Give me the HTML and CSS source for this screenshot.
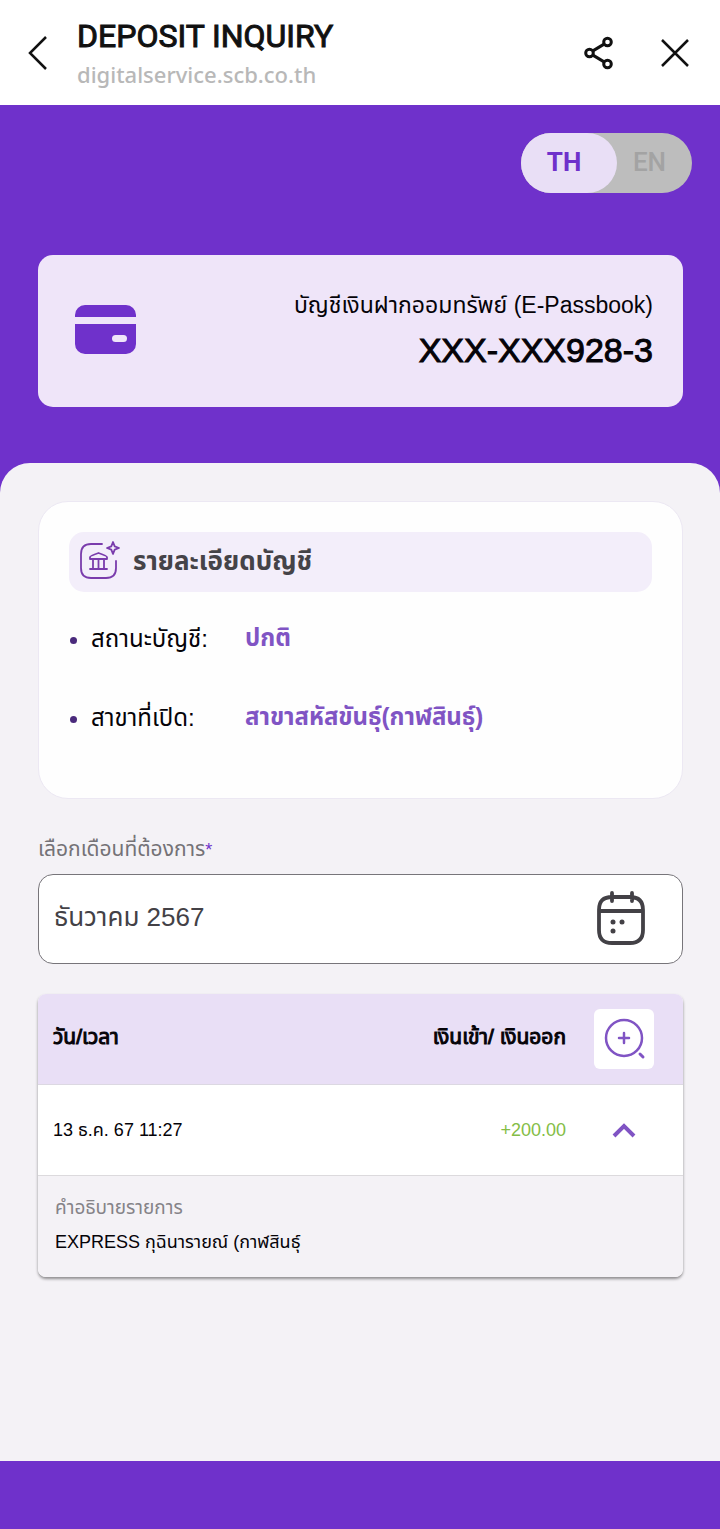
FILE: index.html
```html
<!DOCTYPE html>
<html lang="th">
<head>
<meta charset="utf-8">
<meta name="viewport" content="width=device-width, initial-scale=1">
<title>DEPOSIT INQUIRY</title>
<link rel="stylesheet" href="styles.css">
</head>
<body>
<header class="topbar">
  <button class="icon-button back" type="button" aria-label="Back">
    <svg width="20" height="34" viewBox="0 0 20 34" fill="none" stroke="currentColor" stroke-width="2.500"><path d="M18 1 2 17l16 16"/></svg>
  </button>
  <div class="heading">
    <h1 class="title">DEPOSIT INQUIRY</h1>
    <p class="host">digitalservice.scb.co.th</p>
  </div>
  <button class="icon-button" type="button" aria-label="Share">
    <svg width="30" height="34" viewBox="0 0 30 34" fill="none" stroke="currentColor" stroke-width="3"><circle cx="23.500" cy="6" r="3.800"/><circle cx="5.500" cy="17" r="3.800"/><circle cx="23.500" cy="28" r="3.800"/><path d="m8.900 14.900 11.200-6.800M8.900 19.100l11.200 6.800"/></svg>
  </button>
  <button class="icon-button" type="button" aria-label="Close">
    <svg width="30" height="30" viewBox="0 0 30 30" fill="none" stroke="currentColor" stroke-width="2.500"><path d="m2 2 26 26M28 2 2 28"/></svg>
  </button>
</header>

<section class="hero">
  <div class="language">
    <button class="language-option active" type="button" aria-pressed="true">TH</button>
    <button class="language-option" type="button" aria-pressed="false">EN</button>
  </div>
  <div class="account">
    <svg width="62" height="50" viewBox="0 0 62 50" fill="#6f31cb"><path d="M0 12V10A10 10 0 0 1 10 0H51A10 10 0 0 1 61 10V12ZM0 19H61V39A10 10 0 0 1 51 49H10A10 10 0 0 1 0 39Z"/><rect x="37" y="30" width="15" height="7" rx="3.500" fill="#efe5f9"/></svg>
    <div class="account-text">
      <p class="account-type">บัญชีเงินฝากออมทรัพย์ (E-Passbook)</p>
      <p class="account-number">XXX-XXX928-3</p>
    </div>
  </div>
</section>

<main class="sheet">
  <section class="details">
    <h2 class="details-title">
      <svg width="42" height="40" viewBox="0 0 42 40" fill="none" stroke="#7a3cac" stroke-width="1.800" stroke-linecap="round" stroke-linejoin="round"><path d="M23 3H12Q2 3 2 13V27Q2 37 12 37H27Q37 37 37 27V20"/><path d="m34 1 1.700 4.300L40 7l-4.300 1.700L34 13l-1.700-4.300L28 7l4.300-1.700Z"/><path d="M11 16q0-1 8.500-4 8.500 3 8.500 4v2H11ZM14 18v9M19.500 18v9M25 18v9M11 28H28"/></svg>
      <span>รายละเอียดบัญชี</span>
    </h2>
    <dl class="facts">
      <dt>สถานะบัญชี:</dt><dd>ปกติ</dd>
      <dt>สาขาที่เปิด:</dt><dd>สาขาสหัสขันธุ์(กาฬสินธุ์)</dd>
    </dl>
  </section>

  <div class="field">
    <label class="field-label" for="month">เลือกเดือนที่ต้องการ<span class="required">*</span></label>
    <div class="field-box">
      <input class="field-input" id="month" type="text" value="ธันวาคม 2567" readonly>
      <button class="icon-button calendar" type="button" aria-label="เปิดปฏิทิน">
        <svg width="52" height="56" viewBox="0 0 52 56" fill="none" stroke="currentColor" stroke-width="3.800" stroke-linecap="round"><path d="M17 6H34Q47 6 47 19V39Q47 52 34 52H16Q3 52 3 39V19Q3 6 16 6ZM3 20H47M16 2V10M36 2V10"/><g fill="currentColor" stroke="none"><circle cx="17" cy="31" r="2.500"/><circle cx="26" cy="31" r="2.500"/><circle cx="17" cy="40" r="2.500"/></g></svg>
      </button>
    </div>
  </div>

  <table class="transactions">
    <thead>
      <tr>
        <th scope="col">วัน/เวลา</th>
        <th class="amount" scope="col">เงินเข้า/ เงินออก</th>
        <th class="action"><button class="zoom-button" type="button" aria-label="ขยาย">
          <svg width="44" height="44" viewBox="0 0 44 44" fill="none" stroke="currentColor" stroke-width="2.500" stroke-linecap="round"><circle cx="22" cy="21" r="18"/><path d="M17 21H27M22 16V26"/><path d="m38 37 3 3" stroke-width="3"/></svg>
        </button></th>
      </tr>
    </thead>
    <tbody>
      <tr>
        <td>13 ธ.ค. 67 11:27</td>
        <td class="amount income">+200.00</td>
        <td class="action"><button class="icon-button toggle" type="button" aria-label="ย่อ" aria-expanded="true">
          <svg width="24" height="16" viewBox="0 0 24 16" fill="none" stroke="currentColor" stroke-width="4"><path d="m2 14 10-10 10 10"/></svg>
        </button></td>
      </tr>
      <tr class="description">
        <td colspan="3">
          <p class="description-label">คำอธิบายรายการ</p>
          <p class="description-text">EXPRESS กุฉินารายณ์ (กาฬสินธุ์</p>
        </td>
      </tr>
    </tbody>
  </table>
</main>
<footer class="footer"></footer>
</body>
</html>
```
FILE: styles.css
```css
* { box-sizing: border-box; }
body {
  display: flex;
  flex-direction: column;
  min-height: 100vh;
  margin: 0;
  background: #6f31cb;
  color: #050308;
  font-family: "Liberation Sans", "Noto Sans Thai", sans-serif;
}
h1, h2, p, dl, dd { margin: 0; }
button, input { font: inherit; }
svg { display: block; flex: none; }
.icon-button {
  padding: 0;
  border: 0;
  background: none;
  color: inherit;
  cursor: pointer;
}
.topbar {
  display: flex;
  align-items: center;
  gap: 46px;
  padding: 15px 30px 14px 28px;
  background: #fff;
  color: #111;
}
.topbar .back { margin-right: -17px; }
.heading { flex: 1; }
.title {
  font: 400 32px/42px Roboto, sans-serif;
  -webkit-text-stroke: 1px;
}
.host {
  color: #b8b8b8;
  font: 500 22px/34px "Noto Sans", sans-serif;
}
.hero { padding: 28px 37px 56px 38px; }
.language {
  display: flex;
  width: fit-content;
  margin: 0 -9px 62px auto;
  border-radius: 30px;
  background: #bdbdbd;
}
.language-option {
  width: 75px;
  height: 60px;
  padding: 0 10px 2px 0;
  border: 0;
  border-radius: 30px;
  background: none;
  color: #a3a3a3;
  font: 500 26px/32px Roboto, sans-serif;
}
.language-option.active {
  width: 96px;
  background: #e9dff6;
  color: #6f31cb;
  font-weight: 700;
}
.account {
  display: flex;
  align-items: center;
  justify-content: space-between;
  padding: 30px 30px 32px 37px;
  border-radius: 15px;
  background: #efe5f9;
}
.account-text { text-align: right; }
.account-type { font-size: 23px; line-height: 40px; }
.account-number {
  font-size: 34px;
  line-height: 50px;
  -webkit-text-stroke: 1px;
}
.sheet {
  flex: 1;
  padding: 38px 37px 40px 38px;
  border-radius: 30px 30px 0 0;
  background: #f4f2f6;
}
.details {
  min-height: 298px;
  padding: 30px;
  border: 1px solid #ece8f3;
  border-radius: 30px;
  background: #fefefe;
}
.details-title {
  display: flex;
  align-items: center;
  gap: 12px;
  padding: 9px 10px 11px;
  border-radius: 15px;
  background: #f3eefa;
  color: #454348;
  font-size: 26px;
  font-weight: 700;
  line-height: 40px;
}
.facts {
  display: grid;
  grid-template-columns: 154px 1fr;
  row-gap: 39px;
  margin-top: 27px;
  padding-left: 22px;
  font-size: 24px;
  line-height: 40px;
}
.facts dt { display: list-item; list-style: disc; }
.facts dt::marker { color: #4a2a7c; }
.facts dd { color: #8054c4; font-weight: 700; line-height: 38px; }
.field { margin-top: 32px; }
.field-label {
  display: block;
  color: #747277;
  font-size: 21px;
  line-height: 36px;
}
.required { color: #6f31cb; font-size: 18px; }
.field-box {
  display: flex;
  align-items: center;
  margin-top: 6px;
  padding: 16px 34px 16px 15px;
  border: 1px solid #77757a;
  border-radius: 15px;
  background: #fff;
  color: #434146;
}
.field-input {
  flex: 1;
  min-width: 0;
  padding: 0 0 4px;
  border: 0;
  outline: 0;
  background: none;
  color: inherit;
  font-size: 26px;
  line-height: 40px;
}
.transactions {
  width: 100%;
  margin-top: 30px;
  border-spacing: 0;
  border-radius: 8px;
  background: #fff;
  box-shadow: 0 2px 3px #0000006b;
  font-size: 18px;
  overflow: hidden;
}
.transactions th, .transactions td {
  height: 90px;
  padding: 0 0 0 15px;
  text-align: left;
}
.transactions th {
  height: 91px;
  padding-bottom: 4px;
  background: #e9dff6;
  font-size: 21px;
  font-weight: 400;
  -webkit-text-stroke: 1px;
  border-bottom: 1px solid #dcd8e2;
}
.transactions .amount { text-align: right; }
.transactions .action { width: 117px; padding: 0 29px 0 28px; }
.zoom-button {
  display: flex;
  align-items: center;
  justify-content: center;
  width: 60px;
  height: 60px;
  padding: 0;
  border: 0;
  border-radius: 6px;
  background: #fff;
  color: #8054c4;
}
.toggle { display: block; margin: 0 auto; color: #8054c4; }
.transactions .income { color: #84bd46; }
.transactions .description td {
  height: auto;
  padding: 14px 17px 17px;
  border-top: 1px solid #dcdadd;
  background: #f4f2f6;
  line-height: 35px;
}
.description-label { color: #858388; font-size: 19px; }
.footer { height: 68px; }
```
